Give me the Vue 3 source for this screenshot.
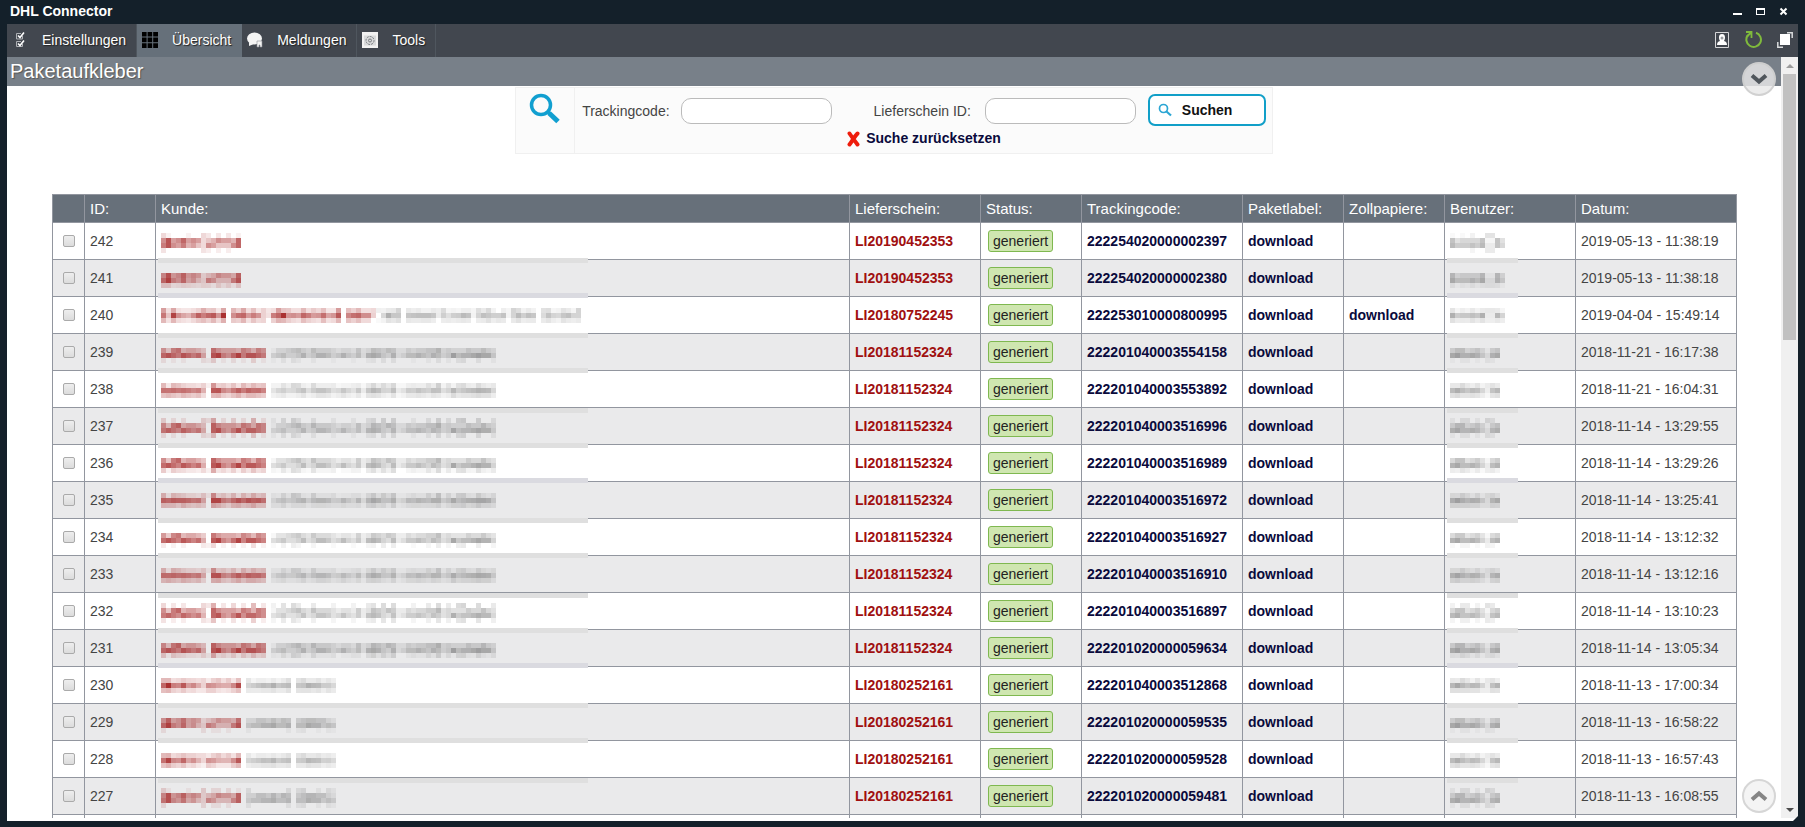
<script setup>
const menu = [
  { label: 'Einstellungen', icon: 'checks' },
  { label: 'Übersicht', icon: 'grid', active: true },
  { label: 'Meldungen', icon: 'chat' },
  { label: 'Tools', icon: 'tools' }
]

const source = [
  ['242', 'a', 'LI20190452353', '222254020000002397', '2019-05-13 - 11:38:19'],
  ['241', 'a', 'LI20190452353', '222254020000002380', '2019-05-13 - 11:38:18'],
  ['240', 'b', 'LI20180752245', '222253010000800995', '2019-04-04 - 15:49:14', true],
  ['239', 'c', 'LI20181152324', '222201040003554158', '2018-11-21 - 16:17:38'],
  ['238', 'c', 'LI20181152324', '222201040003553892', '2018-11-21 - 16:04:31'],
  ['237', 'c', 'LI20181152324', '222201040003516996', '2018-11-14 - 13:29:55'],
  ['236', 'c', 'LI20181152324', '222201040003516989', '2018-11-14 - 13:29:26'],
  ['235', 'c', 'LI20181152324', '222201040003516972', '2018-11-14 - 13:25:41'],
  ['234', 'c', 'LI20181152324', '222201040003516927', '2018-11-14 - 13:12:32'],
  ['233', 'c', 'LI20181152324', '222201040003516910', '2018-11-14 - 13:12:16'],
  ['232', 'c', 'LI20181152324', '222201040003516897', '2018-11-14 - 13:10:23'],
  ['231', 'c', 'LI20181152324', '222201020000059634', '2018-11-14 - 13:05:34'],
  ['230', 'd', 'LI20180252161', '222201040003512868', '2018-11-13 - 17:00:34'],
  ['229', 'd', 'LI20180252161', '222201020000059535', '2018-11-13 - 16:58:22'],
  ['228', 'd', 'LI20180252161', '222201020000059528', '2018-11-13 - 16:57:43'],
  ['227', 'd', 'LI20180252161', '222201020000059481', '2018-11-13 - 16:08:55']
]

// Ink per 5px block: [upper half, lower half, ascender/descender], and the first grey column
const profiles = {
  a: {
    red: 99,
    up: '6956856523465548',
    low: '7965745326533368',
    ext: '3100010032020201'
  },
  b: {
    red: 43,
    up: '6295445758649057655404569455655654480476556046440456446560435535644053554640353446354345',
    low: '6385435766859056746530679554764474570667550037550555664034456503554650364550354355434456',
    ext: '6230000050203040503050060300302030050403000300260200000032000003050000530000430030050023'
  },
  c: {
    red: 21,
    up: '6378455430865554764760133456436444323325236546522434455734333544643',
    low: '7876876740896579688760345334634665346435267643623556546534856678774',
    ext: '3020200032602030205020204053003000200020034050500020030503056005003'
  },
  d: {
    red: 16,
    up: '69568565234655480335546465045665532',
    low: '79657453265333680455667556055766454',
    ext: '31000100302202010300000003034002032'
  },
  u: {
    red: 0,
    up: '63444461163',
    low: '75556572264',
    ext: '10102004400'
  },
  v: {
    red: 0,
    up: '4663453145',
    low: '7866764267',
    ext: '2033020430'
  }
}

const BLOCK = 5
const B_COLUMNS = 84
// Weights of upper / lower / extender ink for each block line, by vertical alignment
const layers = {
  10: [[0, 0, 0.7], [1, 0, 0], [0, 1, 0], [0, 0, 0.5]],
  13: [[1, 0, 0], [0, 1.1, 0], [0.25, 0, 0.4]],
  11: [[0.35, 0, 0.5], [0.4, 0.8, 0], [0, 0.4, 0.2]],
  14: [[0.9, 0, 0], [0, 1.1, 0], [0, 0, 0.35]],
  12: [[0.4, 0, 0.4], [0.3, 0.8, 0], [0, 0.45, 0]]
}

function mosaic(kind, index) {
  const p = profiles[kind]
  const start = [10, 13, 11, 14, 12][index % 5]
  const columns = Math.min(p.up.length, B_COLUMNS)
  const cells = []
  layers[start].forEach((w, line) => {
    for (let c = 0; c < columns; c++) {
      const ink = (Number(p.up[c]) * w[0] + Number(p.low[c]) * w[1] + Number(p.ext[c] || 0) * w[2]) / 10
      if (ink < 0.06) continue
      const red = c < p.red
      cells.push({
        x: 3 + c * BLOCK,
        y: start + line * BLOCK,
        fill: red ? '#a01818' : '#5a5a5a',
        opacity: Math.min(0.9, ink * (red ? 0.82 : 0.6)).toFixed(2)
      })
    }
  })
  return cells
}

const rows = source.map(([id, kind, note, code, date, customs], i) => ({
  id, note, code, date, customs,
  customer: mosaic(kind, i),
  user: mosaic(i < 3 ? 'u' : 'v', i),
  strip: i === 0 ? null : [0, -2, -4, -1, -3][i % 5],
  stripColor: i % 5 === 2 ? '#dadae0' : '#dfdfdf'
}))
</script>

<template>
  <div class="window">
    <header class="titlebar">
      <h1>DHL Connector</h1>
      <div class="controls">
        <button type="button" aria-label="Minimieren"><svg width="10" height="10"><path d="M0 7h9v2H0z" fill="#fff" /></svg></button>
        <button type="button" aria-label="Maximieren"><svg width="10" height="10"><path d="M0 2h9v7H0zM1 4v4h7V4z" fill="#fff" fill-rule="evenodd" /></svg></button>
        <button type="button" aria-label="Schließen"><svg width="10" height="10"><path d="M1.500 2.500l6 6M7.500 2.500l-6 6" stroke="#fff" stroke-width="2" /></svg></button>
      </div>
    </header>

    <nav class="menu">
      <button v-for="m in menu" :key="m.label" type="button" class="item" :class="{ active: m.active }">
        <svg width="16" height="16" viewBox="0 0 16 16" aria-hidden="true">
          <g v-if="m.icon === 'checks'" fill="none" stroke="#fff">
            <path d="M9 1.500H4.500v5.500h6V4M9 9.500H4.500v5h6V12" stroke="#aeb1b5" />
            <path d="M6 3.500l2 2 4-5M6 11.500l2 2 4-5" stroke-width="1.600" />
          </g>
          <path v-else-if="m.icon === 'grid'" d="M0 0h4.600v4.600H0zM5.600 0h4.600v4.600H5.600zM11.200 0H16v4.600h-4.800zM0 5.600h4.600v4.600H0zM5.600 5.600h4.600v4.600H5.600zM11.200 5.600H16v4.600h-4.800zM0 11.200h4.600V16H0zM5.600 11.200h4.600V16H5.600zM11.200 11.200H16V16h-4.800z" fill="#000" />
          <g v-else-if="m.icon === 'chat'" fill="#f4f4f4">
            <ellipse cx="7.500" cy="6.500" rx="7.500" ry="6" />
            <path d="M2 10l0 4 5-2z" />
            <path d="M10 9h5v6h-2v-2h-1v2h-2z" stroke="#8b8f94" stroke-width=".6" />
          </g>
          <g v-else>
            <path d="M0 0h16v16H0z" fill="#f2f2f2" />
            <path d="M2 3.500h12v10H2z" fill="#d9dadb" />
            <circle cx="8" cy="8.500" r="4" fill="none" stroke="#777b80" stroke-dasharray="2 1" />
            <circle cx="8" cy="8.500" r="1.500" fill="none" stroke="#777b80" />
          </g>
        </svg>
        <span>{{ m.label }}</span>
      </button>
      <div class="tools">
        <button type="button" aria-label="Benutzer">
          <svg width="14" height="16"><path d="M.5.500h13v15H.5z" fill="none" stroke="#d5d6d8" /><path d="M7 2c2.400 0 3 1.800 3 3.500S9.500 8 9 9c2 .5 3 1.500 3 4H2c0-2.500 1-3.500 3-4-.5-1-1-1.800-1-3.500S4.600 2 7 2z" fill="#fff" /><circle cx="7" cy="6" r="1.500" fill="#9a9da1" /></svg>
        </button>
        <button type="button" aria-label="Aktualisieren">
          <svg width="18" height="17"><path d="M12 1.700A7.300 7.300 0 1 1 4 4" fill="none" stroke="#7fba3c" stroke-width="2" /><path d="M2 1h5.500v6M7 1.500L3 5.500" fill="none" stroke="#7fba3c" stroke-width="1.800" /></svg>
        </button>
        <button type="button" aria-label="Fenster">
          <svg width="16" height="16"><path d="M3 2h10v11H3z" fill="#fff" /><path d="M10 .8h5.200V6M.8 10v5.200H6" fill="none" stroke="#d8dadc" stroke-width="1.500" /></svg>
        </button>
      </div>
    </nav>

    <div class="body">
      <main class="content">
        <h2>Paketaufkleber</h2>

        <form class="search" @submit.prevent>
          <div class="lens">
            <svg width="32" height="32" viewBox="0 0 32 32" aria-hidden="true"><circle cx="12" cy="12" r="9.500" fill="none" stroke="#119fd0" stroke-width="3.500" /><path d="M18 18l3 3" stroke="#119fd0" stroke-width="3" /><path d="M20 20l9 8.500" stroke="#119fd0" stroke-width="5" /></svg>
          </div>
          <div class="fields">
            <div class="line">
              <label for="code">Trackingcode:</label>
              <input id="code" type="text" class="box">
              <label for="note" class="second">Lieferschein ID:</label>
              <input id="note" type="text" class="box wide-gap">
              <button type="submit" class="go">
                <svg width="14" height="14" aria-hidden="true"><circle cx="5.500" cy="5.500" r="4" fill="none" stroke="#2ba6d4" stroke-width="1.700" /><path d="M8.500 8.500l4.500 4" stroke="#2ba6d4" stroke-width="2.200" /></svg>
                <span>Suchen</span>
              </button>
            </div>
            <a href="#" class="reset">
              <svg width="13" height="16" aria-hidden="true"><path d="M2.500 2.500c2 3 5 7 8 11M10.500 2.500c-3 3-5 7-8 11" fill="none" stroke="#ee1c0c" stroke-width="4" stroke-linecap="round" /></svg>
              <span>Suche zurücksetzen</span>
            </a>
          </div>
        </form>

        <table>
          <colgroup>
            <col class="w-check"><col class="w-id"><col><col class="w-note"><col class="w-s"><col class="w-code"><col class="w-s"><col class="w-s"><col class="w-user"><col class="w-date">
          </colgroup>
          <thead>
            <tr>
              <th></th><th>ID:</th><th>Kunde:</th><th>Lieferschein:</th><th>Status:</th><th>Trackingcode:</th><th>Paketlabel:</th><th>Zollpapiere:</th><th>Benutzer:</th><th>Datum:</th>
            </tr>
          </thead>
          <tbody>
            <tr v-for="r in rows" :key="r.id">
              <td class="check"><input type="checkbox" :aria-label="r.id"></td>
              <td>{{ r.id }}</td>
              <td class="masked">
                <svg width="430" height="36" shape-rendering="crispEdges" aria-hidden="true">
                  <rect v-if="r.strip !== null" x="0" :y="r.strip" width="430" height="5" :fill="r.stripColor" />
                  <rect v-for="(c, k) in r.customer" :key="k" :x="c.x" :y="c.y" width="5" height="5" :fill="c.fill" :fill-opacity="c.opacity" />
                </svg>
              </td>
              <td><a href="#" class="note">{{ r.note }}</a></td>
              <td><span class="badge">generiert</span></td>
              <td><a href="#">{{ r.code }}</a></td>
              <td><a href="#">download</a></td>
              <td><a v-if="r.customs" href="#">download</a></td>
              <td class="masked">
                <svg width="71" height="36" shape-rendering="crispEdges" aria-hidden="true">
                  <rect v-if="r.strip !== null" x="0" :y="r.strip" width="71" height="5" :fill="r.stripColor" />
                  <rect v-for="(c, k) in r.user" :key="k" :x="c.x" :y="c.y" width="5" height="5" :fill="c.fill" :fill-opacity="c.opacity" />
                </svg>
              </td>
              <td>{{ r.date }}</td>
            </tr>
            <tr><td v-for="n in 10" :key="n"></td></tr>
          </tbody>
        </table>
      </main>

      <div class="scrollbar" aria-hidden="true">
        <svg width="17" height="17"><path d="M5 11l4-4 4 4z" fill="#9b9b9b" /></svg>
        <div class="thumb"></div>
        <svg width="17" height="17"><path d="M5 7h8l-4 4z" fill="#4c4c4c" /></svg>
      </div>

      <button type="button" class="round down" aria-label="Nach unten">
        <svg width="18" height="12"><path d="M2 2.500l7 6 7-6" fill="none" stroke="#50565c" stroke-width="4" /></svg>
      </button>
      <button type="button" class="round up" aria-label="Nach oben">
        <svg width="18" height="12"><path d="M2 9.500l7-6 7 6" fill="none" stroke="#858585" stroke-width="4" /></svg>
      </button>
    </div>
    <svg class="grip" width="5" height="5" aria-hidden="true"><path d="M5 0v5H0z" fill="#14202a" /></svg>
  </div>
</template>

<style>
body {
  margin: 0;
}
</style>

<style scoped>
* {
  box-sizing: border-box;
}

.window {
  position: relative;
  display: flex;
  flex-direction: column;
  height: 100vh;
  padding: 0 7px 6px;
  overflow: hidden;
  background: #14202a;
  font: 14px/20px "Liberation Sans", Arial, sans-serif;
  color: #444;
}

button {
  padding: 0;
  border: 0;
  background: none;
  font: inherit;
  color: inherit;
}

svg {
  display: block;
  flex: none;
}

.titlebar {
  display: flex;
  flex: none;
  align-items: center;
  justify-content: space-between;
  height: 24px;
  padding: 0 9px 2px 3px;
}

h1 {
  margin: 0;
  font-size: 14px;
  line-height: 20px;
  color: #fff;
}

.controls {
  display: flex;
  gap: 13px;
}

.menu {
  display: flex;
  flex: none;
  height: 33px;
  background: #42474f;
  color: #fff;
}

.item {
  display: flex;
  align-items: center;
  gap: 14px;
  padding: 0 10px 2px 5px;
  border-right: 1px solid #4f565e;
  text-shadow: 1px 1px 1px #222;
}

.item.active {
  background: #66707a;
  border-color: #66707a;
}

.tools {
  display: flex;
  align-items: center;
  gap: 15px;
  margin-left: auto;
  padding: 0 5px 2px 0;
}

.body {
  position: relative;
  display: flex;
  flex: 1;
  min-height: 0;
  padding-bottom: 3px;
  background: #fff;
}

.content {
  flex: 1;
  min-width: 0;
  overflow: hidden;
}

h2 {
  height: 29px;
  margin: 0 0 1px;
  padding-left: 3px;
  background: #788089;
  color: #fff;
  font-size: 20px;
  font-weight: 400;
  line-height: 28px;
  text-shadow: 1px 1px 1px #555;
}

.search {
  display: flex;
  width: fit-content;
  margin: 0 auto 40px;
  border: 1px solid #f0f0f0;
  background: #fbfbfb;
}

.lens {
  width: 59px;
  padding: 5px 0 0 13px;
  border-right: 1px solid #f0f0f0;
}

.fields {
  display: flex;
  flex-direction: column;
  align-items: center;
  padding: 6px 6px 5px 7px;
}

.line {
  display: flex;
  align-items: center;
}

.box {
  width: 151px;
  height: 26px;
  margin: 0 0 0 11px;
  padding: 0 8px;
  border: 1px solid #bbb;
  border-radius: 10px;
  background: #fff;
  font: inherit;
}

.box.wide-gap {
  margin-left: 14px;
}

.second {
  margin-left: 42px;
}

.go {
  display: flex;
  align-items: center;
  gap: 10px;
  width: 118px;
  height: 32px;
  margin: 0 0 2px 12px;
  padding-left: 8px;
  border: 2px solid #119fc8;
  border-radius: 7px;
  background: #fff;
  color: #111;
  font-weight: 700;
}

a {
  color: #0a0a3c;
  font-weight: 700;
  text-decoration: none;
}

.reset {
  display: flex;
  gap: 6px;
}

.reset svg {
  margin-top: 3px;
}

table {
  width: calc(100% - 89px);
  margin-left: 45px;
  border-collapse: collapse;
  table-layout: fixed;
}

th,
td {
  padding: 0 5px;
  border: 1px solid #92969f;
  text-align: left;
}

th {
  height: 28px;
  background: #67707a;
  color: #fff;
  font-size: 15px;
  font-weight: 400;
}

td {
  height: 37px;
}

tbody tr {
  background: #fff;
}

tbody tr:nth-child(even) {
  background: #eaeaeb;
}

tbody tr:last-child {
  background: #fff;
}

.w-check { width: 32px; }
.w-id { width: 71px; }
.w-note { width: 131px; }
.w-s { width: 101px; }
.w-code { width: 161px; }
.w-user { width: 131px; }
.w-date { width: 161px; }

.check {
  padding: 0;
  text-align: center;
}

.check input {
  appearance: none;
  display: block;
  width: 12px;
  height: 12px;
  margin: 0 auto;
  border: 1px solid #aaa;
  border-radius: 2px;
  background: linear-gradient(#eee, #dcdcdc);
}

.masked {
  padding: 0 0 0 2px;
}

.masked svg {
  position: relative;
  overflow: visible;
}

.note {
  color: #a01010;
}

.badge {
  display: block;
  width: fit-content;
  margin-left: 2px;
  padding: 0 4px;
  border: 1px solid #7fb850;
  border-radius: 3px;
  background: #cfe6b0;
  color: #222;
}

.scrollbar {
  display: flex;
  flex: none;
  flex-direction: column;
  width: 17px;
  background: #f0f0f0;
}

.scrollbar svg:last-child {
  margin-top: auto;
}

.thumb {
  width: 13px;
  height: 35%;
  margin-left: 2px;
  background: #c1c1c1;
}

.round {
  position: absolute;
  right: 22px;
  display: flex;
  align-items: center;
  justify-content: center;
  width: 34px;
  height: 34px;
  border: 2px solid #d6d6d6;
  border-radius: 50%;
  background: #f4f4f4;
}

.round.down {
  top: 5px;
  background: rgba(232, 232, 232, .82);
  border-color: rgba(205, 205, 205, .85);
}

.round.up {
  bottom: 8px;
}

.grip {
  position: absolute;
  right: 7px;
  bottom: 6px;
}
</style>
